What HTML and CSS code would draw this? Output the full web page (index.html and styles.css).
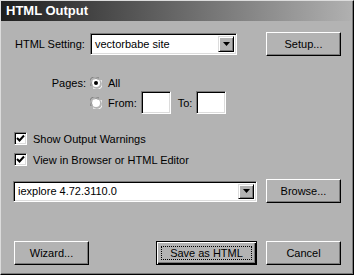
FILE: index.html
```html
<!DOCTYPE html>
<html>
<head>
  <link rel="stylesheet" href="styles.css">
</head>
<body>
  <div class="dialog">
    <div class="titlebar">HTML Output</div>

    <div class="content">
      <!-- setting row -->
      <div class="row-setting">
        <div class="setting-left">
          <span class="lbl-setting">HTML Setting:</span>
          <div class="field combo combo-setting">
            <span class="combo-text">vectorbabe site</span>
            <span class="combo-btn">
              <svg width="7" height="4" viewBox="0 0 7 4"><path d="M0 0h7L3.5 4z" fill="#000" /></svg>
            </span>
          </div>
        </div>
        <button type="button" class="btn">Setup...</button>
      </div>

      <!-- pages -->
      <div class="pages">
        <span class="pages-label">Pages:</span>
        <div class="pages-opts">
          <div class="opt opt-all">
            <svg class="radio" width="12" height="12" viewBox="0 0 12 12">
              <path d="M1.2 9 A5.5 5.5 0 0 1 9 1.2" stroke="#7a7a7a" fill="none" />
              <path d="M2.5 8.2 A4.5 4.5 0 0 1 8.2 2.5" stroke="#000" fill="none" />
              <path d="M10.8 3 A5.5 5.5 0 0 1 3 10.8" stroke="#fff" fill="none" />
              <circle cx="6" cy="6" r="4" fill="#fff" />
              <circle cx="6" cy="6" r="2" fill="#000" />
            </svg>
            All
          </div>
          <div class="opt opt-range">
            <svg class="radio" width="12" height="12" viewBox="0 0 12 12">
              <path d="M1.2 9 A5.5 5.5 0 0 1 9 1.2" stroke="#7a7a7a" fill="none" />
              <path d="M2.5 8.2 A4.5 4.5 0 0 1 8.2 2.5" stroke="#000" fill="none" />
              <path d="M10.8 3 A5.5 5.5 0 0 1 3 10.8" stroke="#fff" fill="none" />
              <circle cx="6" cy="6" r="4" fill="#fff" />
            </svg>
            <span class="lbl-from">From:</span>
            <span class="field page-box"></span>
            <span class="lbl-to">To:</span>
            <span class="field page-box"></span>
          </div>
        </div>
      </div>

      <!-- checkboxes -->
      <div class="check-row check-first">
        <span class="field check">
          <svg width="9" height="9" viewBox="0 0 9 9"><path d="M1 4 L3.5 6.5 L8 1.5" stroke="#000" stroke-width="2" fill="none" /></svg>
        </span>
        Show Output Warnings
      </div>
      <div class="check-row">
        <span class="field check">
          <svg width="9" height="9" viewBox="0 0 9 9"><path d="M1 4 L3.5 6.5 L8 1.5" stroke="#000" stroke-width="2" fill="none" /></svg>
        </span>
        View in Browser or HTML Editor
      </div>

      <!-- browser row -->
      <div class="row-browser">
        <div class="field combo combo-browser">
          <span class="combo-text">iexplore 4.72.3110.0</span>
          <span class="combo-btn">
            <svg width="7" height="4" viewBox="0 0 7 4"><path d="M0 0h7L3.5 4z" fill="#000" /></svg>
          </span>
        </div>
        <button type="button" class="btn">Browse...</button>
      </div>

      <!-- bottom buttons -->
      <div class="row-actions">
        <button type="button" class="btn btn-wizard">Wizard...</button>
        <div class="actions-right">
          <button type="button" class="btn btn-default"><span class="focus">Save as HTML</span></button>
          <button type="button" class="btn">Cancel</button>
        </div>
      </div>
    </div>
  </div>
</body>
</html>
```

FILE: styles.css
```css
/* page + dialog frame */
body {
  margin: 0;
  background: #b3b3b3;
  font-family: "Liberation Sans", Arial, sans-serif;
  font-size: 11px;
  color: #000;
}

.dialog {
  width: 354px;
  height: 275px;
  box-sizing: border-box;
  background: #b3b3b3;
  border: 1px solid;
  border-color: #dcdcdc #000 #000 #dcdcdc;
  box-shadow: inset -1px -1px #7a7a7a;
}

.titlebar {
  height: 20px;
  margin-right: 2px;
  padding-left: 5px;
  line-height: 20px;
  font-size: 13px;
  font-weight: bold;
  color: #fff;
  background: linear-gradient(to right, #1e1e1e, #b0b0b0);
}

.content {
  padding: 0 12px 0 12px;
}

/* sunken boxes */
.field {
  box-sizing: border-box;
  background: #fff;
  border: 1px solid;
  border-color: #7a7a7a #fff #fff #7a7a7a;
  box-shadow: inset 1px 1px #000, inset -1px -1px #dcdcdc;
}

/* raised buttons */
.btn {
  box-sizing: border-box;
  width: 75px;
  height: 24px;
  padding: 0;
  font-family: inherit;
  font-size: 11px;
  color: #000;
  background: #b3b3b3;
  border: 1px solid;
  border-color: #fff #000 #000 #fff;
  box-shadow: inset -1px -1px #7a7a7a;
}

.btn-default {
  width: 101px;
  border: 1px solid #000;
  box-shadow: inset 1px 1px #fff, inset -1px -1px #000, inset -2px -2px #7a7a7a;
  padding: 4px;
}

.focus {
  display: block;
  height: 100%;
  box-sizing: border-box;
  line-height: 12px;
  border: 1px dotted #000;
}

/* combos */
.combo {
  display: flex;
  align-items: center;
  padding: 2px;
}

.combo-text {
  flex: 1;
  padding-left: 2px;
}

.combo-btn {
  box-sizing: border-box;
  width: 16px;
  height: 100%;
  display: flex;
  align-items: center;
  justify-content: center;
  background: #b3b3b3;
  border: 1px solid;
  border-color: #dcdcdc #000 #000 #dcdcdc;
  box-shadow: inset 1px 1px #fff, inset -1px -1px #7a7a7a;
}

/* setting row */
.row-setting {
  margin-top: 11px;
  display: flex;
  justify-content: space-between;
  align-items: center;
}

.setting-left {
  display: flex;
  align-items: center;
}

.lbl-setting {
  width: 77px;
  padding-left: 2px;
  box-sizing: border-box;
}

.combo-setting {
  width: 147px;
  height: 22px;
}

/* pages */
.pages {
  margin-top: 20px;
  display: flex;
  align-items: flex-start;
}

.pages-label {
  width: 73px;
  text-align: right;
  padding-top: 1px;
}

.pages-opts {
  margin-left: 4px;
}

.opt {
  display: flex;
  align-items: center;
}

.opt-all {
  height: 13px;
}

.opt-range {
  margin-top: 2px;
  height: 23px;
}

.radio {
  margin-right: 6px;
}

.page-box {
  width: 30px;
  height: 23px;
  margin-left: 4px;
}

.lbl-to {
  margin-left: 7px;
}

/* checkboxes */
.check-row {
  display: flex;
  align-items: center;
  height: 13px;
  margin-top: 8px;
  padding-left: 1px;
}

.check-first {
  margin-top: 18px;
}

.check {
  width: 13px;
  height: 13px;
  margin-right: 6px;
  display: flex;
  align-items: center;
  justify-content: center;
}

/* browser row */
.row-browser {
  margin-top: 13px;
  display: flex;
  justify-content: space-between;
  align-items: center;
}

.combo-browser {
  width: 244px;
  height: 21px;
}

/* bottom buttons */
.row-actions {
  margin-top: 38px;
  display: flex;
  justify-content: space-between;
  padding-left: 1px;
}

.actions-right {
  display: flex;
  gap: 9px;
}
```
